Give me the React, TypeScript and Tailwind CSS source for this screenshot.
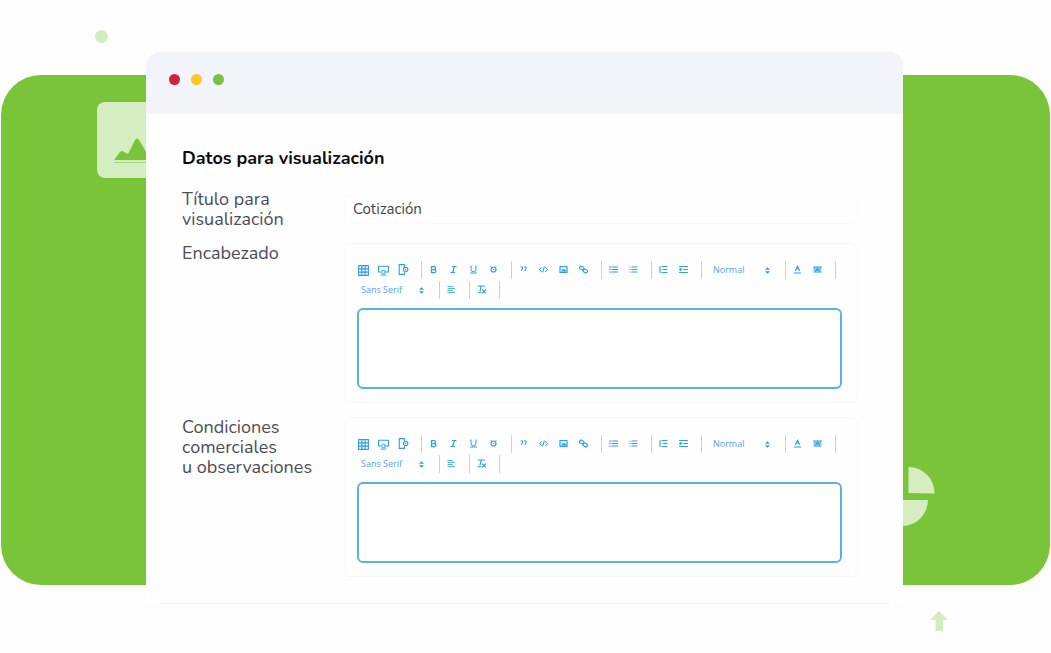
import type { ReactNode } from "react";

const Icon = ({ children, className = "size-[9px]" }: { children: ReactNode; className?: string }) => (
    <svg
        viewBox="0 0 18 18"
        className={className}
        fill="none"
        stroke="currentColor"
        strokeWidth={2}
        strokeLinecap="round"
        strokeLinejoin="round"
        aria-hidden="true"
    >
        {children}
    </svg>
);

type Tool = { label: string; icon: ReactNode };

const insertTools: Tool[] = [
    {
        label: "Tabla",
        icon: (
            <Icon className="mt-0.5 size-[11px]">
                <path d="M1 1h16v16H1zM1 6.3h16M1 11.6h16M6.3 1v16M11.6 1v16" strokeLinecap="square" strokeWidth={1.8} />
            </Icon>
        ),
    },
    {
        label: "Pantalla",
        icon: (
            <Icon className="mt-0.5 size-[11px]">
                <path d="M4 11.500H1V2h16v9.500h-3" strokeWidth={1.8} />
                <circle cx="9" cy="11.500" r="3" strokeWidth={1.6} />
                <path d="M5 16.500h8" strokeWidth={1.6} />
            </Icon>
        ),
    },
    {
        label: "Dispositivo",
        icon: (
            <Icon className="size-[11px]">
                <path d="M10.500 4V1H2v16h8.500v-3" strokeWidth={1.8} />
                <circle cx="12.500" cy="9" r="3.600" strokeWidth={1.8} />
                <path d="M12.500 8v2" strokeWidth={1.5} />
            </Icon>
        ),
    },
];

const textTools: Tool[] = [
    {
        label: "Negrita",
        icon: (
            <Icon>
                <path d="M5 3h5a3 3 0 0 1 0 6H5zM5 9h6a3 3 0 0 1 0 6H5z" strokeWidth={2.5} />
            </Icon>
        ),
    },
    {
        label: "Cursiva",
        icon: (
            <Icon>
                <path d="M7 3h7M4 15h7M10.500 3l-3 12" strokeWidth={2.4} />
            </Icon>
        ),
    },
    {
        label: "Subrayado",
        icon: (
            <Icon>
                <path d="M4 2v6.500a5 5 0 0 0 10 0V2M3 16h12" />
            </Icon>
        ),
    },
    {
        label: "Tachado",
        icon: (
            <Icon>
                <circle cx="9" cy="9" r="5" strokeWidth={2.4} />
                <path d="M5 4 4 3M13 4l1-1M8 8.500h2" />
            </Icon>
        ),
    },
];

const blockTools: Tool[] = [
    {
        label: "Cita",
        icon: (
            <Icon>
                <path d="M4 4h3v4L5 11M11 4h3v4l-2 3" strokeWidth={2.2} />
            </Icon>
        ),
    },
    {
        label: "Código",
        icon: (
            <Icon>
                <path d="M5 5 1 9l4 4M13 5l4 4-4 4M10.500 4l-3 10" />
            </Icon>
        ),
    },
    {
        label: "Imagen",
        icon: (
            <Icon>
                <path d="M2 3h14v12H2z" strokeWidth={2.4} />
                <path d="M5 12.500 8.500 8l2 2 1.500-1.500 2 4z" fill="currentColor" strokeWidth={1} />
                <circle cx="6" cy="6.500" r="1" fill="currentColor" stroke="none" />
            </Icon>
        ),
    },
    {
        label: "Enlace",
        icon: (
            <Icon>
                <rect x="1" y="3" width="9" height="6" rx="3" transform="rotate(25 5.500 6)" strokeWidth={2.2} />
                <rect x="8" y="9" width="9" height="6" rx="3" transform="rotate(25 12.500 12)" strokeWidth={2.2} />
            </Icon>
        ),
    },
];

const listTools: Tool[] = [
    {
        label: "Lista numerada",
        icon: (
            <Icon>
                <path d="M6 4h11M6 9h11M6 14h11M2 3v2M1.500 9h1M1.500 14h1.500" strokeWidth={2.4} />
            </Icon>
        ),
    },
    {
        label: "Lista con viñetas",
        icon: (
            <Icon>
                <path d="M6 4h10M6 9h10M6 14h10M2 4h.1M2 9h.1M2 14h.1" strokeWidth={2.4} />
            </Icon>
        ),
    },
];

const indentTools: Tool[] = [
    {
        label: "Reducir sangría",
        icon: (
            <Icon>
                <path d="M2 3v12M6 3h10M9 9h7M6 15h10M6 9h.1" strokeWidth={2.2} />
            </Icon>
        ),
    },
    {
        label: "Aumentar sangría",
        icon: (
            <Icon>
                <path d="M1 3h16M9 9h8M1 15h16M2 7l3 2-3 2z" strokeWidth={2.2} />
            </Icon>
        ),
    },
];

const colorTools: Tool[] = [
    {
        label: "Color de texto",
        icon: (
            <Icon>
                <path d="m5 11 4-9 4 9M6.500 8h5M3 16h12" strokeWidth={2.2} />
            </Icon>
        ),
    },
    {
        label: "Color de fondo",
        icon: (
            <Icon>
                <rect x="1" y="2" width="16" height="14" fill="currentColor" stroke="none" opacity={0.55} />
                <path d="m5 13 4-8 4 8M7 10h4M2 4l2 2M16 4l-2 2" />
            </Icon>
        ),
    },
];

const alignTools: Tool[] = [
    {
        label: "Alineación",
        icon: (
            <Icon>
                <path d="M2 3h9M2 7h13M2 11h9M2 15h13" strokeWidth={1.6} />
            </Icon>
        ),
    },
];

const clearTools: Tool[] = [
    {
        label: "Quitar formato",
        icon: (
            <Icon>
                <path d="M2 2h13M8.500 2 6 12M2 15.500h6M11 10l6 6M17 10l-6 6" strokeWidth={2.2} />
            </Icon>
        ),
    },
];

const Group = ({ children }: { children: ReactNode }) => (
    <div className="flex h-[18px] items-center border-r border-[#cfd0d4] pl-px pr-2">{children}</div>
);

const Tools = ({ items }: { items: Tool[] }) => (
    <Group>
        {items.map((item) => (
            <button
                key={item.label}
                type="button"
                aria-label={item.label}
                className="flex h-[18px] w-5 items-center justify-center pb-0.5 text-[#2b9fdf]"
            >
                {item.icon}
            </button>
        ))}
    </Group>
);

const Picker = ({ label, value, className }: { label: string; value: string; className: string }) => (
    <Group>
        <div className={`relative flex h-full items-center ${className}`}>
            <select
                aria-label={label}
                defaultValue={value}
                className="w-full appearance-none bg-transparent font-['Open_Sans',sans-serif] text-[9px] text-[#5f9fdf] outline-none"
            >
                <option>{value}</option>
            </select>
            <svg viewBox="0 0 6 8" className="pointer-events-none absolute right-[7px] h-[7px] w-[5px] fill-[#2b9fdf]" aria-hidden="true">
                <path d="M3 0 6 3.200H0zM3 8 0 4.800h6z" />
            </svg>
        </div>
    </Group>
);

const Editor = ({ id }: { id: string }) => (
    <div className="rounded-md border border-x-[#fafafb] border-y-[#f6f6f8] pb-[13px] pl-[7px] pt-[17px]">
        <div className="flex flex-wrap">
            <Tools items={insertTools} />
            <Tools items={textTools} />
            <Tools items={blockTools} />
            <Tools items={listTools} />
            <Tools items={indentTools} />
            <Picker label="Tamaño" value="Normal" className="w-[74px] pl-[10px]" />
            <Tools items={colorTools} />
        </div>
        <div className="mt-0.5 flex flex-wrap">
            <Picker label="Fuente" value="Sans Serif" className="w-[78px] pl-2" />
            <Tools items={alignTools} />
            <Tools items={clearTools} />
        </div>
        <div className="mt-[9px] pl-[5px] pr-[15px]">
            <textarea
                id={id}
                className="block h-[81px] w-full resize-none rounded-md border-2 border-[#5db1e1] bg-white px-3 py-2 text-sm text-[#4a4a55] outline-none"
            />
        </div>
    </div>
);

const labelClass = "text-[18px] leading-5 text-[#4b4d57]";

export default function App() {
    return (
        <main className="relative overflow-hidden bg-[#fdfdfd] pb-[49px] pl-[146px] pr-[148px] pt-[52px] font-[Nunito,Lato,sans-serif]">
            {/* Backdrop */}
            <div className="absolute inset-x-px bottom-[68px] top-[75px] rounded-[40px] bg-[#7ac43a]" />
            <div className="absolute left-[95px] top-[30px] size-[13px] rounded-full bg-[#d3ecbe]" />
            <svg viewBox="0 0 76 76" className="absolute left-[97px] top-[102px] size-[76px]" aria-hidden="true">
                <rect width="76" height="76" rx="8" fill="#d5edc1" />
                <path d="m17 58 6-8q2-2 4 0l4 2 7-14q2-3 4 0l12 20z" fill="#7ac43a" />
                <path d="M17 60.500h42" stroke="#a5d87b" strokeWidth="1" />
            </svg>
            <svg viewBox="0 0 60 60" className="absolute right-[116px] top-[467px] size-[60px]" aria-hidden="true">
                <path d="M33.500 0a26 26 0 0 1 26 26.500l-26-.5z" fill="#d5edc1" />
                <path d="M27 33h26a26 26 0 1 1-26-26z" fill="#d5edc1" />
            </svg>
            <svg viewBox="0 0 18 20" className="absolute right-[103px] top-[611px] h-5 w-[18px]" aria-hidden="true">
                <path d="m9 0 9 9h-5v11H5.500V9H0z" fill="#d3ecbe" />
            </svg>

            {/* Window */}
            <section className="relative rounded-t-[14px] bg-[#fefefe]">
                <header className="flex h-[62px] gap-[11px] rounded-t-[14px] bg-[#f3f4f9] pl-[23px] pt-[22px]">
                    <span className="size-[11px] rounded-full bg-[#cc2440]" />
                    <span className="size-[11px] rounded-full bg-[#fdc52f]" />
                    <span className="size-[11px] rounded-full bg-[#7ac043]" />
                </header>

                <form className="pb-[26px] pl-9 pr-[45px] pt-[30px]">
                    <h1 className="text-[18px] font-bold leading-7 text-[#0c0c10]">Datos para visualización</h1>
                    <div className="mt-[17px] grid grid-cols-[162px_minmax(0,1fr)] gap-y-[14px]">
                        <label htmlFor="titulo" className={labelClass}>
                            Título para
                            <br />
                            visualización
                        </label>
                        <input
                            id="titulo"
                            defaultValue="Cotización"
                            className="h-[30px] w-full self-center rounded-md border border-[#fafafb] bg-transparent px-2 text-[15px] text-[#44464f] outline-none"
                        />

                        <label htmlFor="encabezado" className={labelClass}>
                            Encabezado
                        </label>
                        <Editor id="encabezado" />

                        <label htmlFor="condiciones" className={labelClass}>
                            Condiciones
                            <br />
                            comerciales
                            <br />
                            u observaciones
                        </label>
                        <Editor id="condiciones" />
                    </div>
                </form>
                <div className="mx-[14px] border-b border-[#f3f3f4]" />
            </section>
        </main>
    );
}
